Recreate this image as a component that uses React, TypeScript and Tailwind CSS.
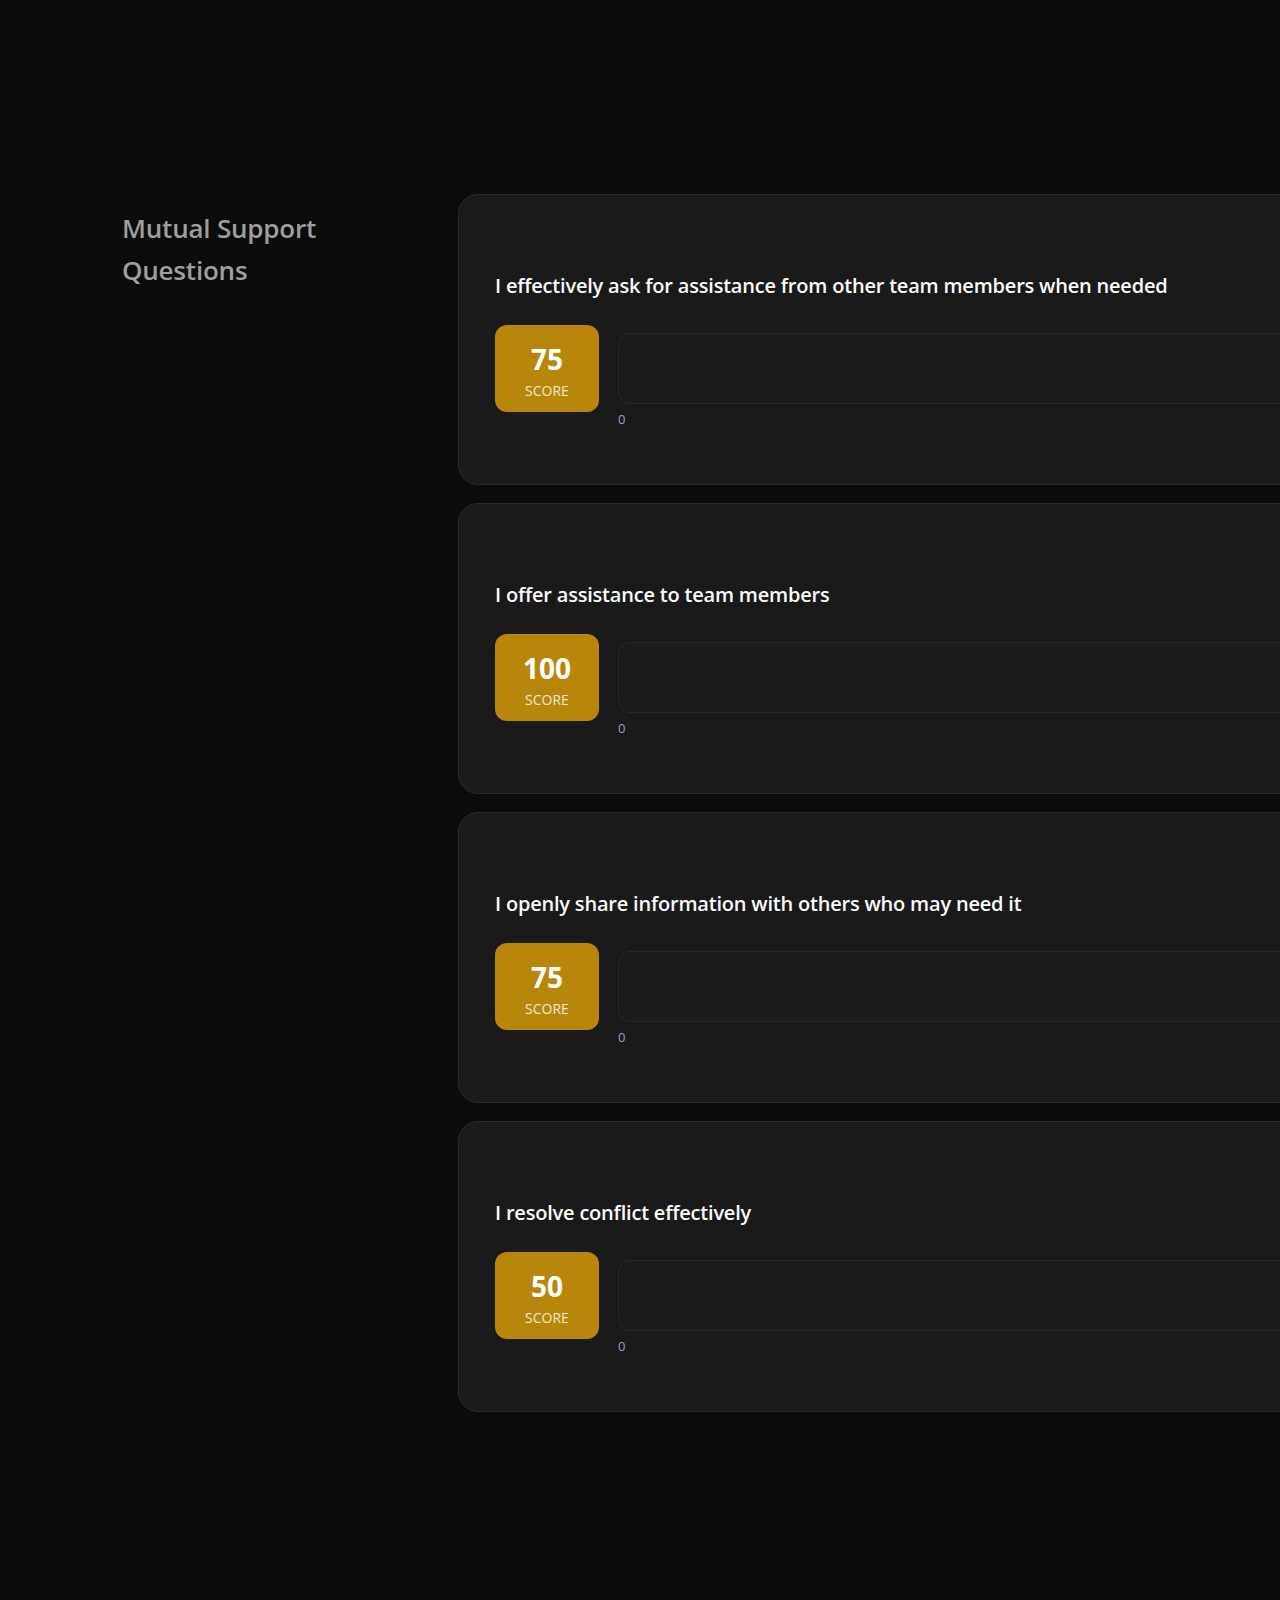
import React from "react"

interface Question {
  text: string
  score: number
}

const questions: Question[] = [
  { text: "I effectively ask for assistance from other team members when needed", score: 75 },
  { text: "I offer assistance to team members", score: 100 },
  { text: "I openly share information with others who may need it", score: 75 },
  { text: "I resolve conflict effectively", score: 50 },
]

function QuestionCard({ question }: { question: Question }) {
  return (
    <div className="w-[1000px] h-[291px] flex-none rounded-[20px] border border-[#2a2a2a] bg-[#1a1a1a] pl-9 pt-[77px]">
      <p className="text-[20px] leading-7 font-semibold tracking-[-0.2px] text-[#fafafa]">{question.text}</p>
      <div className="mt-[25px] flex items-center gap-[19px]">
        <div className="w-[104px] h-[87px] flex-none rounded-xl bg-[#b8860b] flex flex-col items-center pt-[18px]">
          <span className="text-[28px] leading-8 font-bold text-white">{question.score}</span>
          <span className="mt-[6px] text-[14px] leading-5 uppercase text-white/80">Score</span>
        </div>
        <div className="relative flex-1">
          <div className="h-[71px] rounded-xl border border-[#292929] bg-[#1c1c1c]" />
          <span className="absolute left-0 top-full mt-[7px] text-[13px] leading-4 text-gray-400">0</span>
        </div>
      </div>
    </div>
  )
}

export default function App() {
  return (
    <div
      className="min-h-screen w-full overflow-hidden bg-[#0b0b0b]"
      style={{ fontFamily: '"Open Sans", "Noto Sans", sans-serif' }}
    >
      <div className="flex pt-[194px] pl-[122px] pb-[190px]">
        <div className="w-[336px] flex-none pt-[13px]">
          <h2 className="text-[26px] leading-[42px] font-semibold tracking-[-0.2px] text-[#9e9e9e]">
            Mutual Support
            <br />
            Questions
          </h2>
        </div>
        <div className="flex flex-col gap-[18px]">
          {questions.map((q) => (
            <QuestionCard key={q.text} question={q} />
          ))}
        </div>
      </div>
    </div>
  )
}
